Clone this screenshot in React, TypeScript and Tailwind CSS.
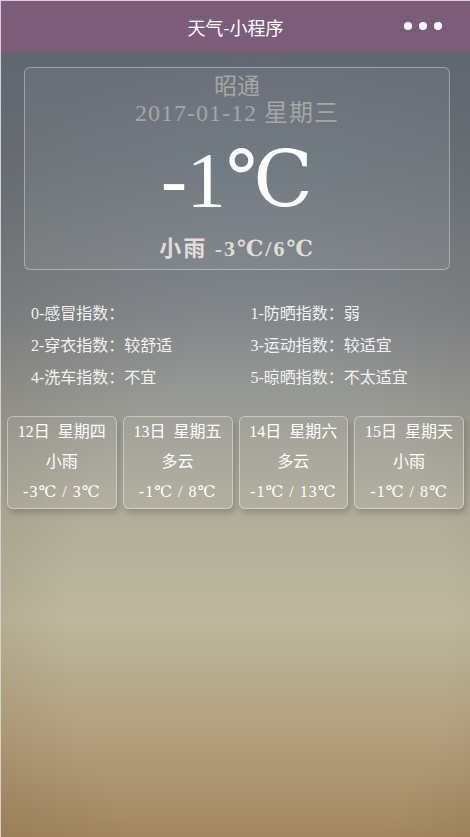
import React from 'react';

const indices = [
  ['0-感冒指数：', ''],
  ['1-防晒指数：', '弱'],
  ['2-穿衣指数：', '较舒适'],
  ['3-运动指数：', '较适宜'],
  ['4-洗车指数：', '不宜'],
  ['5-晾晒指数：', '不太适宜'],
];

const forecast = [
  { day: '12日  星期四', weather: '小雨', temp: '-3℃ / 3℃' },
  { day: '13日  星期五', weather: '多云', temp: '-1℃ / 8℃' },
  { day: '14日  星期六', weather: '多云', temp: '-1℃ / 13℃' },
  { day: '15日  星期天', weather: '小雨', temp: '-1℃ / 8℃' },
];

export default function App() {
  return (
    <div className="min-h-[837px] w-full border-l border-t border-[#d2d2d2] bg-[radial-gradient(ellipse_90%_70%_at_55%_75%,rgba(0,0,0,0)_45%,rgba(70,45,20,0.22)_100%),linear-gradient(180deg,#627489_0%,#707e8c_20%,#848a8f_38%,#9c9d95_50%,#b2ae9b_62%,#bdb79c_74%,#b39f7d_88%,#a4875f_100%)] font-['Liberation_Serif','DejaVu_Serif','Noto_Sans_CJK_SC',serif]">
      {/* Header */}
      <div className="relative flex h-[52px] items-center justify-center bg-[#7b5c7a]">
        <span className="font-['Noto_Sans_CJK_SC',sans-serif] text-[18px] text-white">
          天气-小程序
        </span>
        <div className="absolute right-[28px] top-[21px] flex gap-[7px]">
          <span className="h-[8px] w-[8px] rounded-full bg-white" />
          <span className="h-[8px] w-[8px] rounded-full bg-white" />
          <span className="h-[8px] w-[8px] rounded-full bg-white" />
        </div>
      </div>

      {/* Current weather */}
      <div className="ml-[23px] mr-[20px] mt-[14px] rounded-[6px] border border-white/35 bg-white/[0.06] pb-[5px] pt-[6px] text-center">
        <div className="text-[23px] leading-[26px] text-[#a5a7a1]">昭通</div>
        <div className="text-[24px] leading-[26px] tracking-[1px] text-[#a5a7a1]">2017-01-12 星期三</div>
        <div className="text-[78px] leading-[108px] text-white">-1℃</div>
        <div className="text-[22px] font-bold leading-[30px] tracking-[2px] text-[#e2ded3]">小雨 -3℃/6℃</div>
      </div>

      {/* Life indices */}
      <div className="mt-[28px] grid grid-cols-2 pl-[30px] text-[16px] leading-[32px] text-[#f2f2f0]">
        {indices.map(([label, value]) => (
          <div key={label}>
            {label}
            {value}
          </div>
        ))}
      </div>

      {/* Forecast */}
      <div className="mt-[22px] grid grid-cols-4 gap-[6px] pl-[6px] pr-[6px]">
        {forecast.map((f) => (
          <div
            key={f.day}
            className="rounded-[6px] border border-white/40 bg-white/[0.05] pb-[1px] text-center text-[16px] leading-[30px] text-white shadow-[2px_4px_6px_rgba(0,0,0,0.18)]"
          >
            <div className="whitespace-pre">{f.day}</div>
            <div>{f.weather}</div>
            <div className="whitespace-pre tracking-[1px]">{f.temp}</div>
          </div>
        ))}
      </div>
    </div>
  );
}
